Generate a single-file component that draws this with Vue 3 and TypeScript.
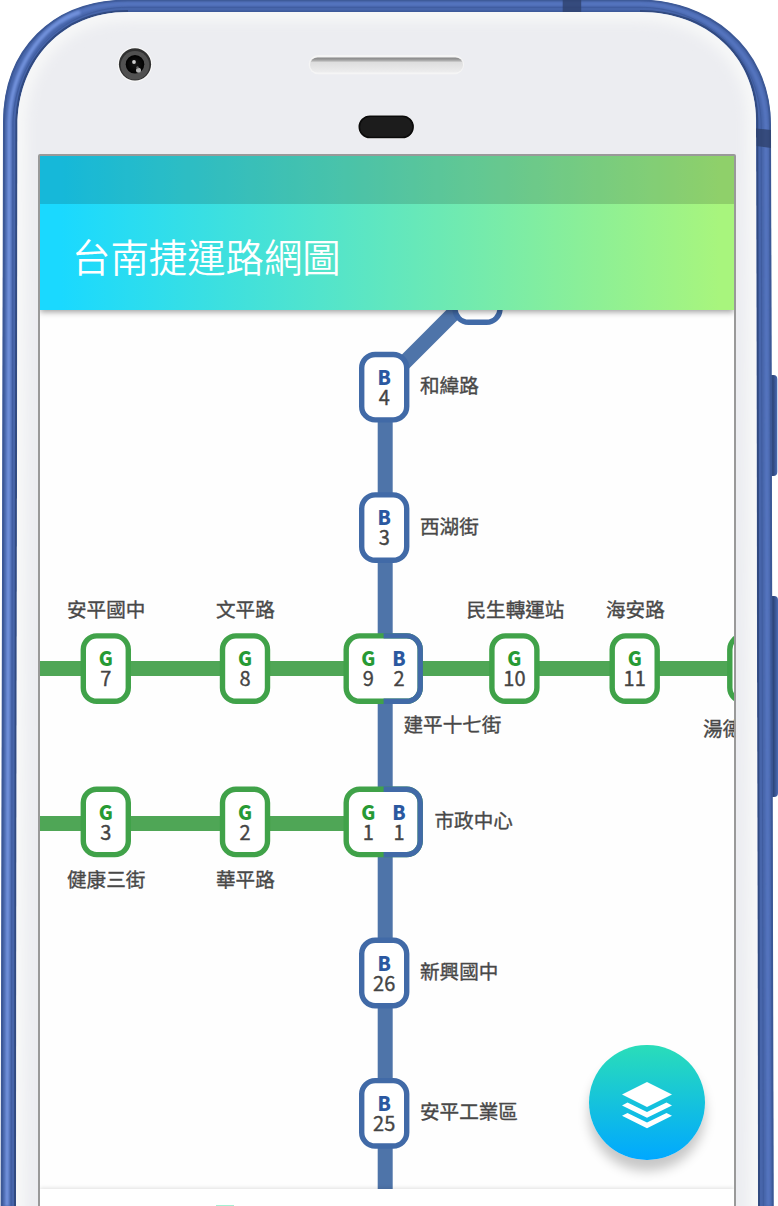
<script setup lang="ts">
type Line = 'green' | 'blue'

interface Mark {
  line: Line
  no: string
  x: number
}

interface Station {
  cx: number
  cy: number
  width: number
  line: Line
  marks: Mark[]
  label: string
  lx: number
  ly: number
}

function single(line: Line, no: string, cx: number, cy: number, label: string, lx: number, ly: number): Station {
  return { cx, cy, width: 45, line, marks: no ? [{ line, no, x: cx }] : [], label, lx, ly }
}

function interchange(g: string, b: string, cy: number, label: string, lx: number, ly: number): Station {
  return {
    cx: 383.2,
    cy,
    width: 74,
    line: 'green',
    marks: [
      { line: 'green', no: g, x: 368.2 },
      { line: 'blue', no: b, x: 399 },
    ],
    label,
    lx,
    ly,
  }
}

const stations: Station[] = [
  single('blue', '', 477.5, 289.6, '', 0, 0),
  single('blue', '4', 384.2, 387.2, '和緯路', 420, 393.3),
  single('blue', '3', 384.2, 527.6, '西湖街', 420, 533.6),
  single('green', '7', 105.8, 668.6, '安平國中', 67, 617.3),
  single('green', '8', 245, 668.6, '文平路', 216, 617.3),
  interchange('9', '2', 668.6, '建平十七街', 403.5, 731.8),
  single('green', '10', 514.4, 668.6, '民生轉運站', 466.5, 617.3),
  single('green', '11', 634.7, 668.6, '海安路', 606, 617.3),
  single('green', '', 752.3, 668.6, '湯德', 703, 735.8),
  single('green', '3', 105.8, 821.9, '健康三街', 67, 886.8),
  single('green', '2', 245, 821.9, '華平路', 216, 886.8),
  interchange('1', '1', 821.9, '市政中心', 434.5, 827.5),
  single('blue', '26', 384.2, 973, '新興國中', 420, 978.6),
  single('blue', '25', 384.2, 1113.3, '安平工業區', 420, 1119),
]
</script>

<template>
  <div class="stage">
    <svg class="phone" viewBox="0 0 778 1206" aria-hidden="true">
      <defs>
        <linearGradient id="button" x1="0" x2="1" y1="0" y2="0">
          <stop offset="0" stop-color="#3b5998" />
          <stop offset="0.55" stop-color="#2f477c" />
          <stop offset="1" stop-color="#4a6bb4" />
        </linearGradient>
        <linearGradient id="slot" x1="0" x2="0" y1="0" y2="1">
          <stop offset="0" stop-color="#858585" />
          <stop offset="0.18" stop-color="#a2a2a2" />
          <stop offset="0.34" stop-color="#dedede" />
          <stop offset="1" stop-color="#ededee" />
        </linearGradient>
        <radialGradient id="lens">
          <stop offset="0" stop-color="#191919" />
          <stop offset="1" stop-color="#000" />
        </radialGradient>
        <filter id="soft" x="-10%" y="-10%" width="120%" height="120%">
          <feGaussianBlur stdDeviation="1.2" />
        </filter>
        <filter id="softer" x="-10%" y="-10%" width="120%" height="120%">
          <feGaussianBlur stdDeviation="7" />
        </filter>
        <clipPath id="face">
          <path d="M16 1206 L17.5 120 C20 62 60 12 128 12 H640 C706 12 755 55 756 120 L758 1206Z" />
        </clipPath>
      </defs>
      <rect x="768" y="375" width="9.3" height="101" rx="4" fill="url(#button)" />
      <rect x="768" y="596" width="10" height="201" rx="4" fill="url(#button)" />
      <path class="shell" d="M1 1206 L3.3 122 C3.5 50 52 0 128 0 H640 C705 0 770 45 770.8 125 L773.3 1206Z" />
      <path class="rim dark" d="M1.6 1206 L4 122 C4.5 50 52 .6 128 .6 H640 C705 .6 770 45 770 125 L772.7 1206" />
      <path class="rim sheen" d="M60 22 C80 10 100 4 128 4 H640 C703 4 765 50 766 125 L768.3 1206" filter="url(#soft)" />
      <path class="rim glow" d="M7 1206 L9.2 122 C11 70 40 25 80 12" filter="url(#soft)" />
      <path class="rim seam" d="M11.2 1206 L13 122 C15 60 60 7.3 128 7.3 H640 C702 7.3 760 52 761.2 125 L763.3 1206" />
      <path class="rim inner" d="M15 1206 L16.4 120 C19 60 60 11 128 11" />
      <path class="rim lip" d="M128 11.2 H640" />
      <path class="rim inner" d="M640 11 C707 11 756 54 757.3 120 L759 1206" />
      <g class="band">
        <rect x="562.7" y="0" width="18.5" height="12" />
        <path d="M756 128.5 L771 130 V148 L756.3 146Z" />
      </g>
      <g clip-path="url(#face)">
        <rect x="10" y="8" width="755" height="1200" fill="#ecedf1" />
        <path
          d="M16 1230 L17.5 120 C20 62 60 12 128 12 H640 C706 12 755 55 756 120 L758 1230"
          fill="none"
          stroke="#f9faf9"
          stroke-width="15"
          filter="url(#softer)"
        />
      </g>
      <circle cx="135" cy="64.5" r="17.3" fill="#f9f9f9" />
      <circle cx="135" cy="64.3" r="16.1" fill="#303030" />
      <circle cx="135" cy="65.3" r="14.3" fill="#515151" />
      <circle cx="135" cy="64.3" r="9.3" fill="url(#lens)" />
      <circle cx="134" cy="62" r="1.9" fill="#cfcfcf" />
      <circle cx="138.5" cy="70.3" r="2.5" fill="#b4b4b4" />
      <circle cx="137.5" cy="67.4" r="1.2" fill="#646464" />
      <rect x="308.7" y="55" width="155.3" height="19.3" rx="9.6" fill="#f5f5f5" />
      <rect x="310" y="57.4" width="153" height="15" rx="7.5" fill="url(#slot)" />
      <rect x="358.2" y="115" width="56" height="24" rx="12" fill="#f8f8f8" />
      <rect x="359.3" y="116.3" width="53.8" height="21.2" rx="10.6" fill="#1c1c1c" stroke="#0a0a0a" stroke-width="1.6" />
    </svg>

    <main class="screen">
      <header class="top">
        <div class="status"></div>
        <h1 class="title">台南捷運路網圖</h1>
      </header>

      <section class="map">
        <svg class="network" viewBox="40 310 694 879">
          <g class="track">
            <path class="green" d="M30 668.4 H760" />
            <path class="green" d="M30 823.4 H370" />
            <path class="blue" d="M385.2 380 V1189" />
            <path class="blue" d="M400 367 L476 291" />
          </g>
          <g v-for="(s, i) in stations" :key="i">
            <rect
              class="stop"
              :class="s.line"
              :x="s.cx - s.width / 2"
              :y="s.cy - 32.7"
              :width="s.width"
              height="65.4"
              rx="13.5"
            />
            <path
              v-if="s.marks.length > 1"
              class="stop half"
              :d="`M383.6 ${s.cy - 32.7} H406.7 a13.5 13.5 0 0 1 13.5 13.5 v38.4 a13.5 13.5 0 0 1 -13.5 13.5 H383.6`"
            />
            <g v-for="m in s.marks" :key="m.line">
              <text class="letter" :class="m.line" :x="m.x" :y="s.cy - 2.4">{{ m.line === 'green' ? 'G' : 'B' }}</text>
              <text class="number" :x="m.x" :y="s.cy + 17.7">{{ m.no }}</text>
            </g>
            <text v-if="s.label" class="label" :x="s.lx" :y="s.ly">{{ s.label }}</text>
          </g>
        </svg>
        <button class="fab" type="button" aria-label="Layers">
          <svg class="layers" viewBox="0 0 50 47">
            <path d="M25 0 L50 12.5 25 25 0 12.5Z" />
            <path d="M0 23.4 L5.5 20.5 25 30 44.5 20.5 50 23.4 25 35.8Z" />
            <path d="M0 33.8 L5.5 30.9 25 40.4 44.5 30.9 50 33.8 25 46.2Z" />
          </svg>
        </button>
      </section>

      <footer class="sheet"><span class="grip"></span></footer>
    </main>
  </div>
</template>

<style>
html,
body {
  margin: 0;
  background: #fff;
  overflow: hidden;
}
</style>

<style scoped>
.stage {
  position: relative;
  box-sizing: border-box;
  width: 778px;
  height: 1206px;
  padding: 154px 0 0 38px;
  overflow: hidden;
  font-family: 'Noto Sans CJK TC', sans-serif;
}
.phone {
  position: absolute;
  inset: 0;
  width: 778px;
  height: 1206px;
}
.shell {
  fill: #4765aa;
}
.rim {
  fill: none;
}
.dark {
  stroke: #3c5896;
  stroke-width: 2;
}
.glow {
  stroke: #7191db;
  stroke-width: 4;
}
.sheen {
  stroke: #5475bf;
  stroke-width: 4;
}
.seam {
  stroke: #3f5c9f;
  stroke-width: 1;
}
.inner {
  stroke: #314a80;
  stroke-width: 2;
}
.lip {
  stroke: #3d5a9b;
  stroke-width: 1.4;
}
.band {
  fill: #2e416d;
  fill-opacity: 0.8;
}
.screen {
  position: relative;
  box-sizing: border-box;
  display: flex;
  flex-direction: column;
  width: 698px;
  height: 1060px;
  border: 2px solid #999;
  border-radius: 2px;
  background: #fff;
  overflow: hidden;
}
.top {
  position: relative;
  z-index: 1;
  flex: none;
  height: 154px;
  background: linear-gradient(90deg, #1ad9ff 3%, #a8f57d 98%);
  box-shadow: 0 2px 6px rgba(0, 0, 0, 0.38);
}
.status {
  height: 48px;
  background: rgba(0, 0, 0, 0.15);
}
.title {
  margin: 0;
  padding-left: 32px;
  color: #fff;
  font-size: 38.4px;
  font-weight: 350;
  line-height: 103px;
}
.map {
  position: relative;
  flex: none;
  height: 879px;
  background: #fefefe;
}
.network {
  display: block;
  width: 694px;
  height: 879px;
}
.track path {
  fill: none;
  stroke-width: 15;
}
.track .green {
  stroke: #4fa656;
}
.track .blue {
  stroke: #4e74a9;
}
.stop {
  fill: #fff;
  stroke-width: 5.4;
}
.stop.green {
  stroke: #40a249;
}
.stop.blue,
.stop.half {
  stroke: #416aa7;
}
.stop.half {
  fill: none;
}
.letter,
.number {
  text-anchor: middle;
}
.letter {
  font-size: 19.3px;
  font-weight: 900;
}
.letter.green {
  fill: #279a34;
}
.letter.blue {
  fill: #2b58a0;
}
.number {
  font-size: 20px;
  fill: #444;
  stroke: #444;
  stroke-width: 0.35;
}
.label {
  font-size: 19.6px;
  fill: #484848;
  stroke: #484848;
  stroke-width: 0.35;
}
.fab {
  position: absolute;
  right: 29.3px;
  bottom: 28.7px;
  display: grid;
  place-items: center;
  width: 115.5px;
  height: 115.5px;
  padding: 5px 0 0 1px;
  border: 0;
  border-radius: 50%;
  background: linear-gradient(#2addb9, #00a8ff);
  box-shadow: 0 11px 12px rgba(0, 0, 0, 0.22);
}
.layers {
  width: 50px;
  height: 47px;
  fill: #fff;
}
.sheet {
  position: relative;
  flex: none;
  height: 30px;
  background: #fff;
  box-shadow: 0 -1px 4px rgba(0, 0, 0, 0.12);
}
.grip {
  display: block;
  width: 18px;
  height: 4px;
  margin: 16px 0 0 175.5px;
  background: #a5efd2;
}
</style>
